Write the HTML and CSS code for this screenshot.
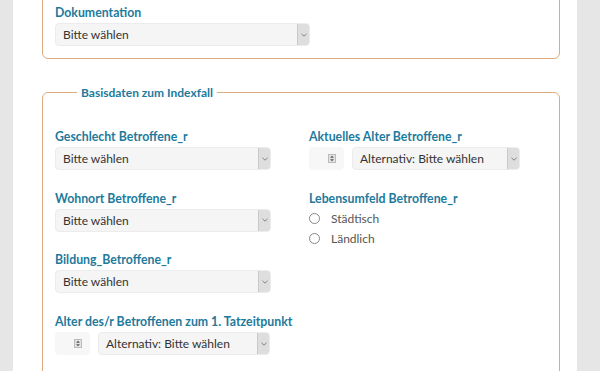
FILE: index.html
```html
<!DOCTYPE html>
<html lang="de">
<head>
  <meta charset="UTF-8" />
  <title>Indexfall</title>
  <link rel="stylesheet" href="styles.css">
</head>
<body>
  <div class="page">
    <fieldset class="box box-first">
      <div class="field">
        <label class="field-label">Dokumentation</label>
        <div class="select select-doc">
          <span class="select-value">Bitte wählen</span>
          <span class="select-arrow"><svg width="6" height="4" viewBox="0 0 6 4"><path d="M0.5 0.8 L3 3.2 L5.5 0.8" fill="none" stroke="#777" stroke-width="0.9"/></svg></span>
        </div>
      </div>
    </fieldset>

    <fieldset class="box">
      <legend>Basisdaten zum Indexfall</legend>
      <div class="grid">
        <div class="field">
          <label class="field-label">Geschlecht Betroffene_r</label>
          <div class="select select-half">
            <span class="select-value">Bitte wählen</span>
            <span class="select-arrow"><svg width="6" height="4" viewBox="0 0 6 4"><path d="M0.5 0.8 L3 3.2 L5.5 0.8" fill="none" stroke="#777" stroke-width="0.9"/></svg></span>
          </div>
        </div>
        <div class="field">
          <label class="field-label">Aktuelles Alter Betroffene_r</label>
          <div class="age-row">
            <div class="number">
              <span class="spin"><svg width="8" height="9" viewBox="0 0 8 9"><rect x="0.5" y="0.5" width="7" height="8" fill="#e4e4e4" stroke="#bbb"/><path d="M2 3.8 L4 1.8 L6 3.8 Z M2 5.2 L4 7.2 L6 5.2 Z" fill="#555"/></svg></span>
            </div>
            <div class="select select-alt">
              <span class="select-value">Alternativ: Bitte wählen</span>
              <span class="select-arrow"><svg width="6" height="4" viewBox="0 0 6 4"><path d="M0.5 0.8 L3 3.2 L5.5 0.8" fill="none" stroke="#777" stroke-width="0.9"/></svg></span>
            </div>
          </div>
        </div>

        <div class="field">
          <label class="field-label">Wohnort Betroffene_r</label>
          <div class="select select-half">
            <span class="select-value">Bitte wählen</span>
            <span class="select-arrow"><svg width="6" height="4" viewBox="0 0 6 4"><path d="M0.5 0.8 L3 3.2 L5.5 0.8" fill="none" stroke="#777" stroke-width="0.9"/></svg></span>
          </div>
        </div>
        <div class="field">
          <label class="field-label">Lebensumfeld Betroffene_r</label>
          <div class="radio"><span class="radio-dot"></span>Städtisch</div>
          <div class="radio"><span class="radio-dot"></span>Ländlich</div>
        </div>

        <div class="field">
          <label class="field-label">Bildung_Betroffene_r</label>
          <div class="select select-half">
            <span class="select-value">Bitte wählen</span>
            <span class="select-arrow"><svg width="6" height="4" viewBox="0 0 6 4"><path d="M0.5 0.8 L3 3.2 L5.5 0.8" fill="none" stroke="#777" stroke-width="0.9"/></svg></span>
          </div>
        </div>
        <div></div>

        <div class="field">
          <label class="field-label">Alter des/r Betroffenen zum 1. Tatzeitpunkt</label>
          <div class="age-row">
            <div class="number">
              <span class="spin"><svg width="8" height="9" viewBox="0 0 8 9"><rect x="0.5" y="0.5" width="7" height="8" fill="#e4e4e4" stroke="#bbb"/><path d="M2 3.8 L4 1.8 L6 3.8 Z M2 5.2 L4 7.2 L6 5.2 Z" fill="#555"/></svg></span>
            </div>
            <div class="select select-alt2">
              <span class="select-value">Alternativ: Bitte wählen</span>
              <span class="select-arrow"><svg width="6" height="4" viewBox="0 0 6 4"><path d="M0.5 0.8 L3 3.2 L5.5 0.8" fill="none" stroke="#777" stroke-width="0.9"/></svg></span>
            </div>
          </div>
        </div>
      </div>
    </fieldset>
  </div>
</body>
</html>
```

FILE: styles.css
```css
html, body {
  margin: 0;
  height: 100%;
  background: #e6e6e6;
  font-family: Lato, 'Open Sans', sans-serif;
  font-size: 12px;
  color: #444;
  overflow: hidden;
}

.page {
  background: #fff;
  margin: 0 23px 0 13px;
  min-height: 100%;
  padding: 0 0 40px 29px;
}

.box {
  width: 492px;
  margin: 0 0 25px 0;
  padding: 0 12px 12px 12px;
  border: 1px solid #dcab7e;
  border-radius: 6px;
}

.box-first {
  margin-top: -18px;
  padding-top: 21px;
}

.box legend {
  margin-left: 22px;
  padding: 0 4px;
  color: #1d7a9c;
  font-weight: bold;
  font-size: 12px;
  line-height: 17px;
}

.grid {
  display: grid;
  grid-template-columns: 254px 1fr;
  grid-auto-rows: 61.7px;
  padding-top: 27px;
}

.field-label {
  display: block;
  color: #1d7a9c;
  font-weight: bold;
  font-size: 12.3px;
  line-height: 17px;
  margin-bottom: 2px;
  white-space: nowrap;
}

.select {
  display: flex;
  align-items: stretch;
  height: 23px;
  box-sizing: border-box;
  background: #f5f5f5;
  border: 1px solid #ececec;
  border-radius: 4px;
}

.select-doc { width: 255px; }
.select-half { width: 216px; }
.select-alt { width: 168px; }
.select-alt2 { width: 172px; }

.select-value {
  flex: 1;
  padding-left: 7px;
  line-height: 21px;
  color: #333;
}

.select-arrow {
  width: 11px;
  display: flex;
  align-items: center;
  justify-content: center;
  background: #dedede;
  border-left: 1px solid #c9c9c9;
  border-radius: 0 3px 3px 0;
}

.age-row {
  display: flex;
  gap: 8px;
}

.number {
  width: 35px;
  height: 23px;
  box-sizing: border-box;
  background: #f7f7f7;
  border-radius: 4px;
  display: flex;
  align-items: center;
  justify-content: flex-end;
  padding-right: 8px;
}

.spin svg { display: block; }

.radio {
  display: flex;
  align-items: center;
  height: 20px;
  color: #555;
}

.radio:first-of-type { margin-top: 1px; }

.radio-dot {
  width: 9px;
  height: 9px;
  border: 1px solid #888;
  border-radius: 50%;
  margin: 0 11px 0 0;
}
```
